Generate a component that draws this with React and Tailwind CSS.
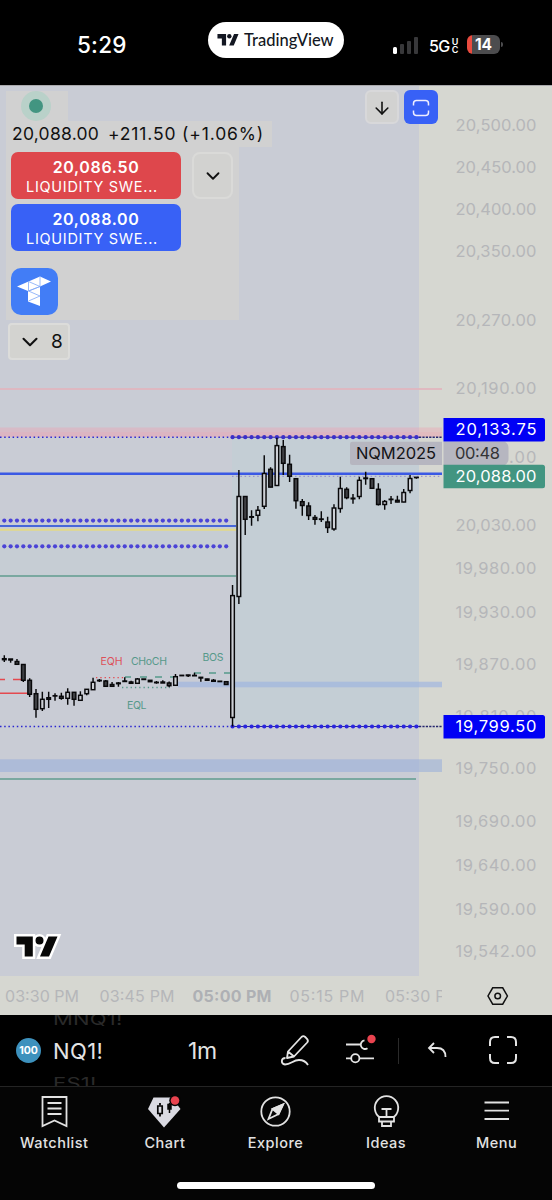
import { ArrowDown, ChevronDown } from "lucide-react";

// [wick top, body top, body bottom, wick bottom, hollow]
const candles = [
  [655.3, 658.7, 659.7, 662], [659, 659, 660, 662.7], [659, 661.5, 664.3, 664.3],
  [664.5, 664.5, 680.3, 682], [678.3, 680.3, 694.3, 697], [689, 693.7, 709.3, 717.7],
  [691.7, 699.3, 708.7, 711, 1], [691.7, 697.7, 699.3, 708], [693.3, 695.7, 696, 700.7],
  [692.7, 696.3, 698.3, 699.7], [688.3, 692.3, 698.3, 704.7, 1], [692.3, 692.3, 699.3, 705.7],
  [691.3, 695.3, 700.3, 700.3, 1], [689.3, 689.3, 693.7, 695.3, 1], [677.7, 682.3, 689.7, 689.7, 1],
  [679, 680.3, 680.8, 682], [680, 681, 686.3, 686.3], [682, 684.5, 686.3, 686.3],
  [682, 683, 683.7, 686.7], [677.3, 681, 681.5, 681.5], [680.7, 682, 683.3, 683.3],
  [678, 679, 683.3, 684, 1], [679, 679, 679.5, 680], [680.3, 680.3, 681.7, 681.7],
  [681, 682.3, 682.7, 683.7], [680.3, 682, 683, 683], [681.5, 683, 685.7, 687.3],
  [674, 676.7, 685.3, 685.3, 1], [675.3, 675.3, 675.7, 675.7], [674.7, 675, 675.7, 677],
  [672.7, 675.4, 675.8, 675.8], [677, 677.3, 678, 681.7], [678.7, 679, 680.3, 680.3],
  [679, 680.3, 681.3, 681.3], [681, 681.2, 681.6, 681.6], [681.3, 681.7, 684.5, 684.5],
  [585, 595.6, 717.5, 726.5, 1], [470, 496.5, 596.5, 604, 1], [496.3, 496.5, 519.3, 535],
  [510.3, 516.7, 517.2, 525.7], [506, 510.3, 515.3, 521.3, 1], [455.3, 473.5, 506.3, 509, 1],
  [467.3, 469.3, 487.1, 487.3], [437.7, 445.6, 485.5, 486, 1], [440, 446.6, 463.3, 475],
  [454.7, 464.3, 476.3, 482], [478.3, 478.7, 500.7, 508.7], [499, 501.7, 505.5, 515.7],
  [502.3, 506, 515.5, 520], [515, 517.5, 519.3, 524.7], [511.3, 519, 519.4, 522],
  [516.7, 522, 527.5, 533], [504.3, 508, 529, 530.7, 1], [476.7, 488.5, 508.5, 512.7, 1],
  [487.3, 489.3, 497.7, 499.3], [494, 498.2, 498.8, 503.7], [476.7, 480.3, 496.5, 499.3, 1],
  [471.7, 478, 478.6, 484.7], [478.3, 478.7, 488.3, 488.3], [483.3, 489.3, 504.5, 505.5],
  [500, 501.5, 504.5, 509.7, 1], [496, 499.2, 499.6, 504], [495.7, 500.3, 502, 502.3],
  [489, 492.5, 502, 502.3, 1], [475, 478.5, 490.5, 493.3, 1], [477, 477.3, 477.6, 478.8],
];

const priceLabels = [
  ["20,500.00", 125], ["20,450.00", 167], ["20,400.00", 209], ["20,350.00", 251.5],
  ["20,270.00", 320], ["20,190.00", 388], ["20,110.00", 457], ["20,030.00", 525.5],
  ["19,980.00", 568.5], ["19,930.00", 612], ["19,870.00", 664], ["19,810.00", 716],
  ["19,750.00", 768.5], ["19,690.00", 821], ["19,640.00", 865], ["19,590.00", 909],
  ["19,542.00", 951.5],
];

const candleX = (i) => 4.3 + i * 6.34;

function DotRow({ from, to, y, color }) {
  const dots = [];
  for (let i = from; i <= to; i++) dots.push(i);
  return dots.map((i) => <circle key={i} cx={candleX(i)} cy={y} r="2.1" fill={color} />);
}

function PriceTag({ y, color, children }) {
  return (
    <g>
      <path d={`M443.5 ${y}h99q2.5 0 2.5 2.5v18.5q0 2.5 -2.5 2.5h-99z`} fill={color} />
      <text x="455.5" y={y + 17} textLength="81" fill="#fff">{children}</text>
    </g>
  );
}

function Chart() {
  return (
    <svg viewBox="0 85 552 930" className="block h-[930px] w-full text-[16.5px]" fontFamily="Inter, 'Liberation Sans', sans-serif">
      <rect y="85" width="552" height="930" fill="#d6d7d1" />
      <rect y="85" width="419" height="891" fill="#c9ccd5" />
      <rect y="85" width="552" height="1" fill="#a9a9ac" />

      {/* session and supply / demand zones */}
      <rect x="232" y="437" width="187" height="289" fill="#c4ced5" />
      <rect y="530" width="236" height="46" fill="#c6cdd4" />
      <rect y="427.5" width="442" height="9.5" fill="#f0a0b0" opacity=".38" />
      <rect y="432" width="442" height="5" fill="#f0a0b0" opacity=".2" />
      <rect y="388" width="442" height="2" fill="#e2b4bd" opacity=".85" />
      <rect x="178" y="681.7" width="264" height="5.6" fill="#9db4e0" opacity=".65" />
      <rect y="759.3" width="442" height="12.7" fill="#93aadb" opacity=".52" />

      {/* price axis */}
      <g fill="#b5b6b9">
        {priceLabels.map(([label, y]) => (
          <text key={label} x="455.5" y={y + 5.6} textLength="81">{label}</text>
        ))}
      </g>

      {/* levels */}
      <g fill="none">
        <path d="M0 437.2H232M0 726.5H232" stroke="#2a25d0" strokeWidth="1.5" strokeDasharray="1.5 2.7" />
        <path d="M232 437.2H419M232 726.5H419" stroke="#2a25a0" strokeWidth="1" />
        <path d="M419 437.2H442M419 726.5H442" stroke="#26266e" strokeWidth="1.4" strokeDasharray="2.2 1.2" />
        <path d="M0 473.8H442" stroke="#3b59e4" strokeWidth="2.6" />
        <path d="M232 476.3H442" stroke="#9a92cb" strokeWidth="1.2" strokeDasharray="1.5 2.7" />
        <path d="M0 526H236" stroke="#4867d8" strokeWidth="1.8" />
        <path d="M0 529.7H236" stroke="#e3d987" strokeWidth="2" />
        <path d="M0 576H236M0 779H416" stroke="#609c8f" strokeWidth="1.7" />
        <path d="M0 679.5H5M13 679.5H21M0 693.3H30" stroke="#e4494f" strokeWidth="1.4" />
        <path d="M96 677.7H125" stroke="#e4494f" strokeWidth="1.2" strokeDasharray="1.3 3" />
        <path d="M125 677H131M140 677H147M155 677H162M170 677H175M194 673H201M209 673H216M224 673H231" stroke="#56998a" strokeWidth="1.5" />
        <path d="M122 687.5H170" stroke="#56998a" strokeWidth="1.3" strokeDasharray="1.3 3" />
      </g>
      <DotRow from={0} to={35} y={520.6} color="#4b43d6" />
      <DotRow from={0} to={35} y={546.3} color="#4b43d6" />
      <DotRow from={36} to={65} y={437.2} color="#3b2fc9" />
      <DotRow from={36} to={65} y={726.5} color="#2a25dd" />

      {candles.map(([high, top, bottom, low, hollow], i) => (
        <g key={i} stroke="#08080a" strokeWidth="1.45">
          <path d={`M${candleX(i)} ${high}V${top}M${candleX(i)} ${bottom}V${low}`} />
          <rect x={candleX(i) - 1.8} y={top} width="3.6" height={bottom - top} fill={hollow ? "#cdd0d6" : "#3e3f43"} />
        </g>
      ))}

      <g fontSize="10.5">
        <text x="100.5" y="664.8" textLength="22" fill="#dd505a">EQH</text>
        <text x="131" y="664.8" textLength="36" fill="#56998a">CHoCH</text>
        <text x="202.5" y="660.8" textLength="21" fill="#56998a">BOS</text>
        <text x="127" y="708.7" textLength="19.5" fill="#56998a">EQL</text>
      </g>

      {/* contract label with bar countdown */}
      <path d="M350 444q0 -2.3 2.3 -2.3H442V465H352.3q-2.3 0 -2.3 -2.3z" fill="#b6b6c0" />
      <path d="M443.5 441.7H505q3.5 2 3.5 6v11q0 4 -3.5 6.3H443.5z" fill="#b6b6c0" />
      <text x="356" y="459.3" textLength="80" fill="#131316">NQM2025</text>
      <text x="455" y="459.3" textLength="45" fill="#333336">00:48</text>
      <PriceTag y={418} color="#0000f5">20,133.75</PriceTag>
      <PriceTag y={464.8} color="#429581">20,088.00</PriceTag>
      <PriceTag y={715} color="#0000f5">19,799.50</PriceTag>

      {/* time axis */}
      <clipPath id="timeAxis"><rect y="976" width="442" height="39" /></clipPath>
      <g fill="#b5b6b9" clipPath="url(#timeAxis)" fontSize="16">
        <text x="5" y="1002" textLength="74">03:30 PM</text>
        <text x="99.5" y="1002" textLength="75">03:45 PM</text>
        <text x="192.5" y="1002" textLength="79" fontWeight="700" fill="#aeb0b4">05:00 PM</text>
        <text x="289.5" y="1002" textLength="75">05:15 PM</text>
        <text x="385" y="1002" textLength="75">05:30 PM</text>
      </g>
      <g fill="none" stroke="#111" strokeWidth="1.5">
        <path d="M492.7 987.8h10l4.7 8.2l-4.7 8.2h-10l-4.7-8.2z" />
        <circle cx="497.7" cy="996" r="2.8" />
      </g>

      <g transform="translate(16.5 936.5)">
        <g fill="#fff" stroke="#fff" strokeWidth="5">
          <path d="M0 0H16.3V20H8.2V8.1H0zM19 4.1a4 4 0 1 0 8 0a4 4 0 1 0 -8 0M32 0H41L32.5 20H23.5z" />
        </g>
        <path d="M0 0H16.3V20H8.2V8.1H0zM19 4.1a4 4 0 1 0 8 0a4 4 0 1 0 -8 0M32 0H41L32.5 20H23.5z" fill="#080808" />
      </g>
    </svg>
  );
}

function StatusBar() {
  return (
    <header className="flex h-[85px] bg-black text-white">
      <div className="ml-[77px] mt-[30px] w-[131px] text-[22.5px] leading-[30px] font-medium tracking-[0.2px]">5:29</div>
      <div className="mt-[22px] flex h-[35.5px] w-[136px] items-center gap-[5px] rounded-full bg-white pl-[9px] text-[#131722]">
        <svg viewBox="0 0 22 12" className="h-[11.5px] w-[22px]" fill="currentColor">
          <path d="M0 0H9V12H4.6V4.8H0zM17.3 0H22L17 12H12.2z" />
          <circle cx="12.4" cy="2.4" r="2.3" />
        </svg>
        <span className="font-[Lato] text-[16.5px] leading-5 font-medium">TradingView</span>
      </div>
      <div className="mt-[36px] ml-[49px] flex h-[18px] items-end gap-[3px]">
        <i className="h-[7px] w-[4px] rounded-[1.5px] bg-white" />
        <i className="h-[10px] w-[4px] rounded-[1px] bg-[#38383a]" />
        <i className="h-[13.5px] w-[4px] rounded-[1px] bg-[#38383a]" />
        <i className="h-[17px] w-[4px] rounded-[1px] bg-[#38383a]" />
      </div>
      <div className="mt-[36px] ml-[11px] flex h-[19px] w-[31px] items-center">
        <span className="text-[16px] font-medium tracking-[-0.6px]">5G</span>
        <span className="ml-[2px] text-[9px] leading-[8px] font-semibold">U<br />C</span>
      </div>
      <div className="mt-[35px] ml-[7px] flex h-[19px] w-[33px] items-center justify-center rounded-[6px] bg-[linear-gradient(90deg,#e94b3f_5px,#4c4c4e_5px)] text-[15.5px] font-bold">14</div>
      <i className="mt-[42px] ml-[1px] h-[5px] w-[1.5px] rounded-r bg-[#4c4c4e]" />
    </header>
  );
}

function OrderButton({ price, className }) {
  return (
    <button className={`flex h-[47px] w-[170px] flex-col items-center rounded-[7px] pt-[5px] text-white ${className}`}>
      <span className="text-[16px] leading-5 font-semibold tracking-[0.65px]">{price}</span>
      <span className="mr-[8px] text-[14.5px] leading-[20px] tracking-[0.7px]">LIQUIDITY SWE...</span>
    </button>
  );
}

function Legend() {
  return (
    <div className="absolute top-[6px] left-[6px]">
      <div className="h-[30px] w-[62px] bg-[#d1d1d1] pl-[15px]">
        <div className="flex size-[30px] items-center justify-center rounded-full bg-[#b9d1c9]">
          <i className="size-[14px] rounded-full bg-[#429581]" />
        </div>
      </div>
      <div className="flex h-[26px] w-[266px] items-center gap-[9px] bg-[#d1d1d1] pl-[6px] text-[17.5px] whitespace-nowrap text-[#111]">
        <span className="w-[87px] tracking-[0.25px]">20,088.00</span>
        <span className="tracking-[0.85px]">+211.50 (+1.06%)</span>
      </div>
      <div className="h-[173px] w-[233px] bg-[#d1d1d1] pt-[5px] pl-[5px]">
        <div className="flex gap-[11px]">
          <OrderButton price="20,086.50" className="bg-[#de474c]" />
          <button className="flex h-[47px] w-[41px] items-center justify-center rounded-[8px] border-2 border-[#dadad8] bg-[#d2d2d0]">
            <ChevronDown size={22} strokeWidth={2} className="text-[#111]" />
          </button>
        </div>
        <OrderButton price="20,088.00" className="mt-[5px] bg-[#3861f6]" />
        <svg viewBox="0 0 47 47" className="mt-[17px] block size-[47px]">
          <rect width="47" height="47" rx="10" fill="#427df6" />
          <path d="M6 18.5L29 8.5L40 13.5L29 18.5V38L17 33.5V23z" fill="#fff" />
          <path d="M17.5 13.5V23L29 18.5L17.5 13.5M29 8.5V18.5M17.5 23L29 28L17.5 33M29 18.5L17.5 23" fill="none" stroke="#7fa7f8" strokeWidth=".8" />
        </svg>
      </div>
      <button className="mt-[3px] ml-[2px] flex h-[37px] w-[62px] items-center gap-[8px] rounded-[4px] border-2 border-[#dcdcda] bg-[#d3d3d0] pt-px pl-[7px] text-[19px] text-[#111]">
        <ChevronDown size={26} strokeWidth={1.9} />
        8
      </button>
    </div>
  );
}

function PaneButtons() {
  return (
    <div className="absolute top-[5px] left-[365px] flex gap-[5px]">
      <button className="flex size-[34px] items-center justify-center rounded-[6px] border-2 border-[#d8d8da] bg-[#d2d2d1]">
        <ArrowDown size={20} strokeWidth={1.9} className="mt-px text-[#111]" />
      </button>
      <button className="flex size-[34px] items-center justify-center rounded-[6px] bg-[#3861f6]">
        <svg viewBox="0 0 18 18" className="mt-px size-[18px]" fill="none" stroke="#eef" strokeWidth="1.5">
          <path d="M1.5 6.5V4.5Q1.5 1.5 4.5 1.5H13.5Q16.5 1.5 16.5 4.5V6.5M1.5 11.5V13.5Q1.5 16.5 4.5 16.5H13.5Q16.5 16.5 16.5 13.5V11.5" />
        </svg>
      </button>
    </div>
  );
}

function Toolbar() {
  return (
    <div className="flex h-[71px] items-center overflow-hidden bg-black text-[#e4e4e4]">
      <div className="ml-[16px] flex size-[25px] items-center justify-center rounded-full bg-[#3d91bd] text-[10.5px] font-bold text-white">100</div>
      {/* symbol wheel, neighbours are cut off by the bar */}
      <div className="ml-[12px] flex w-[135px] flex-col text-[22px] leading-[30px]">
        <span className="origin-left translate-y-[-2px] scale-y-75 tracking-[0.2px] text-[#2a2a2a]">MNQ1!</span>
        <span className="tracking-[0.4px]">NQ1!</span>
        <span className="origin-left translate-y-[2px] scale-y-75 tracking-[0.2px] text-[#2a2a2a]">ES1!</span>
      </div>
      <span className="w-[93px] pt-px text-[23px] tracking-[-0.4px]">1m</span>
      <svg viewBox="0 0 30 32" className="mb-[2px] -ml-px mr-px h-[32px] w-[30px]" fill="none" stroke="currentColor" strokeWidth="1.8" strokeLinejoin="round">
        <path d="M8 17.5L21.5 3Q23.3 1.3 25.2 3L27 4.8Q28.7 6.7 27.2 8.5L14 22.5L7 24zM8 17.5L14 22.5" />
        <path d="M5.5 24Q2 24 1.8 27Q1.8 30 5 30.5C11 30.5 13 26 19 26Q25 26 28 31" />
      </svg>
      <svg viewBox="0 0 32 32" className="mb-[3px] ml-[34px] h-[32px] w-[32px]" fill="none" stroke="currentColor" strokeWidth="1.8">
        <path d="M1 11.5H16M22.5 15.2A4.3 4.3 0 1 1 19.5 7.4M1 25.3H6.5M14.5 25.3H29" />
        <circle cx="10.3" cy="25.3" r="4.1" />
        <circle cx="26.5" cy="6" r="4.2" fill="#e9434f" stroke="none" />
      </svg>
      <i className="ml-[21px] h-[26px] w-px bg-[#2a2a2a]" />
      <svg viewBox="0 0 20 16" className="mb-px ml-[28px] h-[16px] w-[20px]" fill="none" stroke="currentColor" strokeWidth="1.8">
        <path d="M7 1L2 6L7 11M2 6H10Q18.5 6 18.5 15" />
      </svg>
      <svg viewBox="0 0 30 30" className="mb-px ml-[41px] size-[30px]" fill="none" stroke="currentColor" strokeWidth="2">
        <path d="M2 11V7Q2 2 7 2H11M19 2H23Q28 2 28 7V11M28 19V23Q28 28 23 28H19M11 28H7Q2 28 2 23V19" />
      </svg>
    </div>
  );
}

const tabs = [
  {
    name: "Watchlist",
    icon: <path d="M4.5 2H28.5V31L16.5 25.5L4.5 31zM9.5 8H23.5M9.5 13.5H23.5M9.5 19H23.5" />,
  },
  {
    name: "Chart",
    icon: (
      <>
        <path d="M5.5 2.5H24L32.5 14L16 32.5L0 14z" fill="#dadae2" stroke="none" />
        <path d="M12 8V10.5M12 19V21.5" stroke="#050505" />
        <path d="M9.8 11H14.2V18.5H9.8z" stroke="#050505" strokeWidth="1.7" />
        <path d="M21.5 8V18M20 9.5H23V14H20z" stroke="#050505" fill="#050505" strokeWidth="1.5" />
        <circle cx="27" cy="5.5" r="5.8" fill="#050505" stroke="none" />
        <circle cx="27" cy="5.5" r="4.3" fill="#e9434f" stroke="none" />
      </>
    ),
  },
  {
    name: "Explore",
    icon: (
      <>
        <circle cx="16.5" cy="16.5" r="14.2" />
        <path d="M24 9.5L19.5 19L9.5 24L13.5 14z" />
        <path d="M24 9.5L19.5 19L13.5 14z" fill="currentColor" />
      </>
    ),
  },
  {
    name: "Ideas",
    icon: <path d="M10 22.5A11.7 11.7 0 1 1 23 22.5M9 22H24V26.5H9zM12 26.5H21V31H12zM11.5 14H21.5M16.5 14V22" />,
  },
  { name: "Menu", icon: <path d="M4.5 7.5H29M4.5 15.7H29M4.5 24H29" /> },
];

function TabBar() {
  return (
    <nav className="h-[114px] border-t border-[#242424] bg-[#050505] text-[#e2e2e2]">
      <div className="-ml-px grid h-[95px] grid-cols-5">
        {tabs.map((tab) => (
          <div key={tab.name} className="flex flex-col items-center pt-[8px]">
            <svg viewBox="0 0 33 33" className="size-[33px]" fill="none" stroke="currentColor" strokeWidth="1.8">
              {tab.icon}
            </svg>
            <span className="mt-[5px] text-[14.5px] leading-5 font-medium tracking-[0.5px]">{tab.name}</span>
          </div>
        ))}
      </div>
      <div className="mx-auto h-[7px] w-[198px] rounded-full bg-white" />
    </nav>
  );
}

export default function App() {
  return (
    <div className="h-[1200px] w-[552px] overflow-hidden bg-black font-[Inter,'Liberation_Sans',sans-serif]">
      <StatusBar />
      <main className="relative h-[930px]">
        <Chart />
        <Legend />
        <PaneButtons />
      </main>
      <Toolbar />
      <TabBar />
    </div>
  );
}
